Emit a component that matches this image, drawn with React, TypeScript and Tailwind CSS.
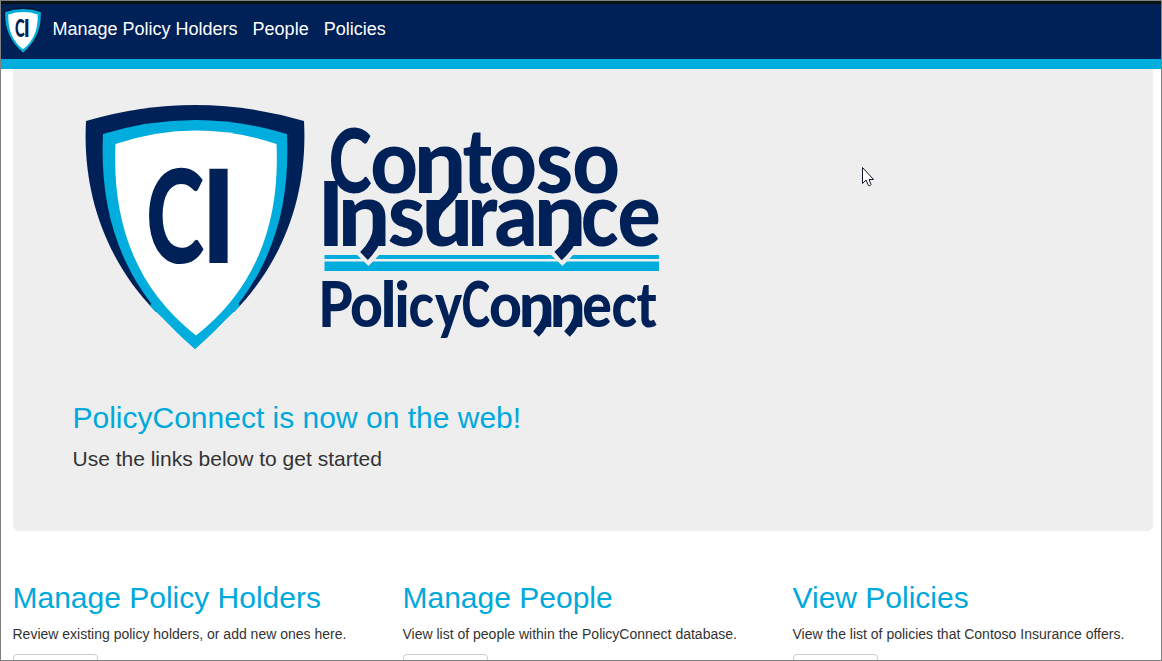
type Glyph = [char: string, left: number, right: number];

const NAVY = "#002157";
const CYAN = "#00addc";

const contoso: Glyph[] = [
  ["C", 331, 370], ["o", 373, 415], ["n", 420, 461], ["t", 463, 491], ["o", 492, 534], ["s", 538, 571], ["o", 575, 617],
];
const insurance: Glyph[] = [
  ["I", 324, 338], ["n", 344, 385], ["s", 390, 423], ["u", 427, 467], ["r", 472, 497], ["a", 497, 533], ["n", 540, 581], ["c", 583, 617], ["e", 620, 658],
];
const policyConnect: Glyph[] = [
  ["P", 322, 351], ["o", 352, 381], ["l", 384, 393], ["i", 397, 407], ["c", 410, 433], ["y", 435, 462], ["C", 463, 489],
  ["o", 491, 520], ["n", 523, 551], ["n", 554, 582], ["e", 584, 610], ["c", 613, 636], ["t", 637, 656],
];
const initials: Glyph[] = [["C", 149, 202], ["I", 209, 228]];

// Left and right side bearings of Lato Black, as a share of the glyph's advance.
const bearings: Record<string, [number, number]> = {
  C: [0.05, 0.04], I: [0.24, 0.24], P: [0.11, 0.05], o: [0.06, 0.06], n: [0.12, 0.1], t: [0.02, 0.04], s: [0.06, 0.06],
  u: [0.1, 0.12], r: [0.15, 0.02], a: [0.06, 0.11], c: [0.06, 0.04], e: [0.06, 0.06], l: [0.22, 0.22], i: [0.18, 0.18], y: [0, 0],
};

function Word({ glyphs, y, size }: { glyphs: Glyph[]; y: number; size: number }) {
  return (
    <text y={y} fontSize={size} fontWeight={900} fill={NAVY} className="font-['Lato','Open_Sans',sans-serif]">
      {glyphs.map(([char, left, right], i) => {
        const [a, b] = bearings[char];
        const advance = (right - left) / (1 - a - b);
        return (
          <tspan key={i} x={left - a * advance} textLength={advance} lengthAdjust="spacingAndGlyphs">
            {char}
          </tspan>
        );
      })}
    </text>
  );
}

function Shield() {
  return (
    <g>
      <path fill={NAVY} d="M86 121Q195 89 304 121C308 195 283 262 234 312H156C107 262 82 195 86 121Z" />
      <path fill={CYAN} d="M103 134Q195 106 287 134C291 220 265 290 195 349C125 290 99 220 103 134Z" />
      <path fill={CYAN} d="M150 306L195 349L240 306L230 290H160Z" />
      <path fill="#fff" d="M115.500 144Q196 117 276.500 144C280 220 258 287 196 335.500C134 287 112 220 115.500 144Z" />
      <Word glyphs={initials} y={263} size={129} />
    </g>
  );
}

function Logo() {
  return (
    <svg className="block h-[260px] w-[600px]" viewBox="73 97 600 260" role="img" aria-label="Contoso Insurance PolicyConnect">
      <Shield />
      <path fill={CYAN} d="M324.500 255H659V259H324.500ZM324.500 261.500H659V271H324.500Z" />
      <path fill="#eee" d="M355 253H381L368.500 266ZM549 253H575L562.500 266Z" />
      <Word glyphs={contoso} y={193} size={89} />
      <Word glyphs={insurance} y={246} size={89} />
      <g fill="none" stroke={NAVY} strokeWidth="11">
        <path d="M455 184C454 202 436 202 433 222" />
        <path d="M379 226Q378 242 364 256" />
        <path d="M575 226Q574 242 558 256" />
      </g>
      <Word glyphs={policyConnect} y={327} size={63} />
      <g fill="none" stroke={NAVY} strokeWidth="8">
        <path d="M547 314Q545 325 536 334" />
        <path d="M578 314Q576 325 567 334" />
      </g>
    </svg>
  );
}

const sections = [
  { title: "Manage Policy Holders", text: "Review existing policy holders, or add new ones here." },
  { title: "Manage People", text: "View list of people within the PolicyConnect database." },
  { title: "View Policies", text: "View the list of policies that Contoso Insurance offers." },
];

export default function App() {
  return (
    <div className="relative h-[661px] w-[1162px] overflow-hidden border border-[#808080] bg-white font-['Liberation_Sans',Arial,sans-serif] text-[#333]">
      <header className="flex h-[68px] items-start border-t-3 border-b-10 border-t-[#0b1414] border-b-[#00addc] bg-[#002157]">
        <svg className="mt-[3px] ml-[3px] h-[47px] w-[38px] shrink-0" viewBox="80 98 230 258" preserveAspectRatio="none" aria-hidden="true">
          <path fill="#001638" d="M81 120Q195 82 309 120C314 210 282 290 195 356C108 290 76 210 81 120Z" />
          <path fill={CYAN} d="M87 125Q195 93 303 125C307 215 273 288 195 349C117 288 83 215 87 125Z" />
          <path fill="#fff" d="M106 139Q195 112 284 139C286 220 262 282 195 330C128 282 104 220 106 139Z" />
          <Word glyphs={initials} y={263} size={130} />
        </svg>
        <nav className="ml-[10.5px] flex gap-[15px] pt-[11px] text-[18px] leading-7 text-white">
          <a>Manage Policy Holders</a>
          <a>People</a>
          <a>Policies</a>
        </nav>
      </header>

      <main className="pr-2 pl-3">
        <section className="h-[462px] rounded-b-md bg-[#eee] px-[60px] pt-7">
          <Logo />
          <h1 className="mt-11 -ml-[0.5px] text-[30px] leading-[33px] text-[#00a9db]">PolicyConnect is now on the web!</h1>
          <p className="mt-[10px] -ml-[0.5px] text-[21px] leading-[30px]">Use the links below to get started</p>
        </section>
        <div className="mt-[50px] -ml-[0.5px] grid grid-cols-[390px_390px_1fr]">
          {sections.map((s) => (
            <section key={s.title}>
              <h2 className="text-[30px] leading-[33px] text-[#00a9db]">{s.title}</h2>
              <p className="mt-[10px] text-[14px] leading-5">{s.text}</p>
              <button aria-label={s.title} className="mt-[10px] ml-[0.5px] block h-[34px] w-[85px] rounded-[4px] border border-[#ccc] bg-white" />
            </section>
          ))}
        </div>
      </main>

      <svg className="absolute top-[165px] left-[861px] h-[22px] w-[14px]" viewBox="0 0 14 22" aria-hidden="true">
        <path d="M.5 1.500V17.500L4 14L6.500 19.500Q8 20.500 9 18.500L7 13.500H11.500Z" fill="#fff" stroke="#111827" />
      </svg>
    </div>
  );
}
